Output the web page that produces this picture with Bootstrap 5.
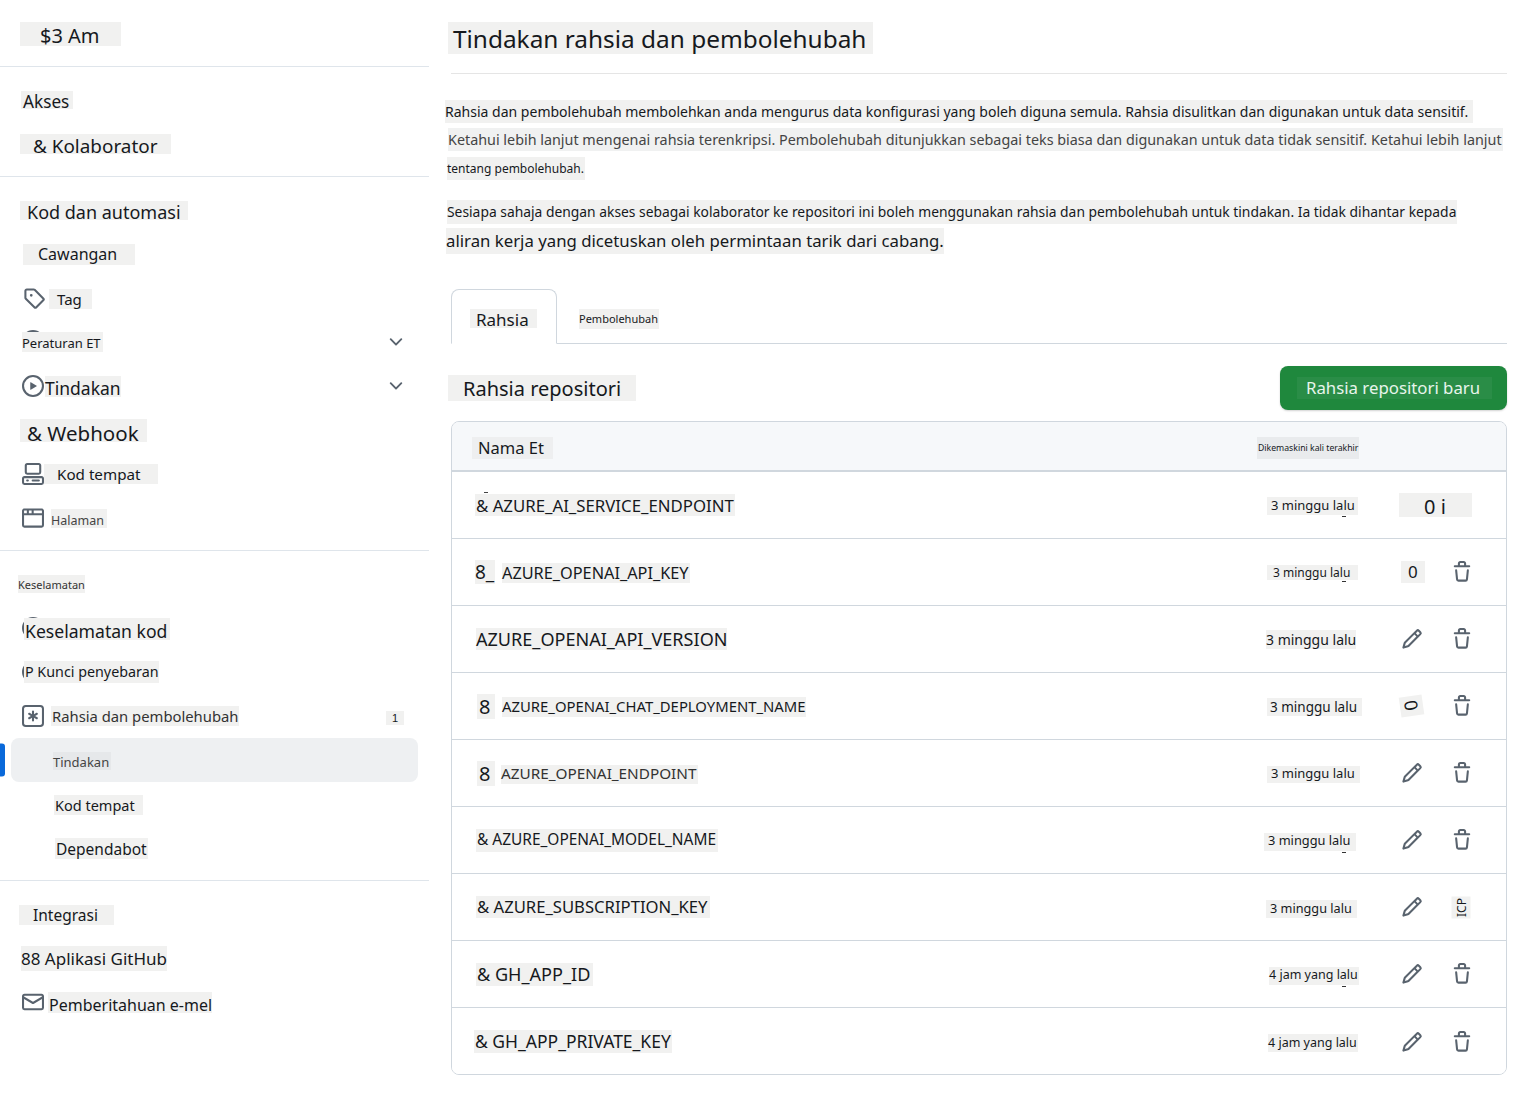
<!DOCTYPE html>
<html lang="ms">
<head>
<meta charset="utf-8">
<title>Tindakan rahsia dan pembolehubah</title>
<link href="https://cdn.jsdelivr.net/npm/bootstrap@5.3.0/dist/css/bootstrap.min.css" rel="stylesheet">
<style>
body{font-family:"Noto Sans",sans-serif;color:#16191d;background:#fff;overflow:hidden}
.pg{width:1523px;height:1097px}
.sb{width:429px;flex:none}
.sb-top{height:67px;border-bottom:1px solid #dfe5eb}
.sb-sec{padding:11px 0 10px;border-bottom:1px solid #dfe5eb}
.sb-sec.last{border-bottom:0}
.rw{height:44px}
.pt{display:block;background:#f1f1f0;white-space:nowrap;flex:none;position:relative}
.ic{width:22px;height:22px;flex:none;fill:#59636e}
.chev{width:20px;height:20px;fill:#59636e;margin-left:auto;margin-right:23px}
.act{background:#eef0f2;border-radius:8px;margin:0 11px}
.bar{width:5px;height:33px;background:#0969da;border-radius:0 3px 3px 0}
.s1{margin:2px 0 0 20px;width:101px;height:24px;line-height:28px;font-size:20px;padding-left:20px}
.s2{margin:0 0 0 21px;width:52px;height:18px;line-height:22px;font-size:17.2px;padding-left:2px}
.s3{margin:0 0 0 20px;width:151px;height:20px;line-height:24px;font-size:18.9px;padding-left:13px}
.s4{margin:0 0 0 20px;width:168px;height:19px;line-height:23px;font-size:18px;padding-left:7px}
.s5{margin:1px 0 0 23px;width:112px;height:21px;line-height:20px;font-size:16px;padding-left:15px}
.s6i{margin:0 0 0 23px}
.s6{margin:2px 0 0 4px;width:43px;height:20px;line-height:20px;font-size:15px;padding-left:8px}
.s7i{margin:-2px 0 0 22px}
.s7{margin:0 0 0 -22px;width:81px;height:20px;line-height:22px;font-size:13px}
.s8i{margin:0 0 0 22px}
.s8{margin:0 0 0 1px;width:76px;height:21px;line-height:25px;font-size:17.5px}
.s9{margin:0 0 0 20px;width:127px;height:23px;line-height:28px;font-size:20.5px;padding-left:7px}
.s10i{margin:0 0 0 22px}
.s10{margin:0;width:114px;height:20px;line-height:21px;font-size:15.2px;padding-left:13px}
.s11i{margin:0 0 0 22px}
.s11{margin:1px 0 0 7px;width:56px;height:19px;line-height:23px;font-size:12.5px;color:#444}
.s12{margin:0 0 0 18px;width:67px;height:18px;line-height:19px;font-size:11px;color:#333}
.s13i{margin:0 0 0 22px}
.s13{margin:2px 0 0 -20px;width:146px;height:22px;line-height:26px;font-size:17.6px;padding-left:1px}
.s14{margin:0 0 0 -20px;width:135px;height:22px;line-height:22px;font-size:14.3px;padding-left:1px}
.s15i{margin:0 0 0 22px}
.s15{margin:0 0 0 7px;width:188px;height:20px;line-height:20px;font-size:14.8px;padding-left:1px;color:#333}
.bdg{margin:3px 25px 0 auto;width:18px;height:14px;line-height:15px;font-size:11px;font-family:"Liberation Sans",sans-serif;text-align:center}
.s16{margin:2px 0 0 42px;width:58px;height:18px;line-height:20px;font-size:13px;background:#e6e8ea;color:#444}
.s17{margin:2px 0 0 54px;width:89px;height:20px;line-height:20px;font-size:14.5px;padding-left:1px}
.s18{margin:1px 0 0 55px;width:93px;height:21px;line-height:22px;font-size:15.5px;padding-left:1px}
.s19{margin:2px 0 0 19px;width:95px;height:20px;line-height:20px;font-size:15.5px;padding-left:14px}
.s20{margin:1px 0 0 21px;width:146px;height:25px;line-height:25px;font-size:17px}
.s21i{margin:0 0 0 22px}
.s21{margin:1px 0 0 4px;width:164px;height:21px;line-height:26px;font-size:16px;padding-left:1px}
.mn{width:1056px;margin-left:22px}
.hd{height:74px;border-bottom:1px solid #e5e5e5;padding-top:22px}
.h1p{margin:0 0 0 -3px;width:425px;height:32px;line-height:33px;font-size:24.4px;padding-left:5px;font-weight:400}
.l1{margin-top:26px;margin-left:-6px;width:1028px;height:23px;line-height:23px;font-size:14.03px}
.l2{margin-top:5px;margin-left:-3px;width:1055px;height:23px;line-height:23px;font-size:14.35px;color:#444;background:#f0f1f1}
.l3{margin-top:6px;margin-left:-4px;width:138px;height:23px;line-height:23px;font-size:12px}
.l4{margin-top:20px;margin-left:-4px;width:1010px;height:24px;line-height:24px;font-size:13.85px}
.l5{margin-top:4px;margin-left:-5px;width:498px;height:26px;line-height:26px;font-size:16.77px}
.nav-tabs.tb{margin-top:35px;height:55px;border-color:#d0d7de;align-items:stretch}
.tb .nav-link{height:55px;border-radius:8px 8px 0 0;padding:0;color:#16191d;display:flex;align-items:center;border-color:transparent}
.tb .nav-link.active{width:106px;border-color:#d0d7de #d0d7de #fff;margin-bottom:-1px;color:#16191d}
.tb .nav-link.other{margin-left:21px}
.t1{margin:4px 0 0 18px;width:67px;height:19px;line-height:22px;font-size:17px;padding-left:6px}
.t2{margin-top:4px;width:80px;height:20px;line-height:20px;font-size:11px}
.sh{margin-top:22px;height:44px}
.shp{margin:0 0 0 -3px;width:188px;height:26px;line-height:27px;font-size:20px;padding-left:15px;font-weight:400}
.btn.nw{width:227px;height:44px;border-radius:8px;background:#1f883d;border:0;padding:0;display:flex;align-items:center;text-align:left;box-shadow:0 1px 2px rgba(0,0,0,.18)}
.nwp{margin-left:17px;width:195px;height:22px;line-height:21px;font-size:16.8px;padding-left:9px;background:#2a8d47;color:#e8f5ec}
.card.bx{margin-top:11px;height:654px;border-color:#d0d7de;border-radius:8px;overflow:hidden}
.bxh{height:49px;background:#f6f8fa;border-bottom:1px solid #d0d7de;flex:none}
.nm{width:808px;flex:none}
.dt{width:135px;flex:none}
.list-group-item.rr{height:67px;padding:0;border-color:#d0d7de;display:flex;align-items:center;color:#16191d}
.h1c{margin:4px 0 0 20px;width:81px;height:22px;line-height:22px;font-size:16.5px;padding-left:6px;background:#eeeff0}
.h2c{margin:4px 0 0 -3px;width:102px;height:22px;line-height:22px;font-size:8.7px;padding-left:1px;background:#e9ebed}
.two{margin-left:23px;display:flex;align-items:center}
.n1{margin-left:23px;width:260px;height:22px;line-height:24px;font-size:16.8px;padding-left:1px}
.n1::before{content:"";position:absolute;left:9px;top:-2px;width:4px;height:1px;background:#444}
.b8{width:20px;height:24px;line-height:24px;font-size:19px}
.n2{margin:2px 0 0 7px;width:188px;height:20px;line-height:20px;font-size:16.3px}
.n3{margin-left:24px;width:251px;height:22px;line-height:22px;font-size:18.07px}
.b8b{margin:0 0 0 25px;width:18px;height:25px;line-height:25px;font-size:20px;padding-left:2px}
.n4{margin:2px 0 0 7px;width:304px;height:20px;line-height:19px;font-size:14.85px}
.n5{margin:2px 0 0 6px;width:197px;height:19px;line-height:17px;font-size:15.3px;color:#333}
.n6{margin-left:24px;width:242px;height:23px;line-height:20px;font-size:15.45px;padding-left:1px}
.n7{margin-left:24px;width:234px;height:22px;line-height:22px;font-size:16.65px;padding-left:1px}
.n8{margin-left:24px;width:117px;height:23px;line-height:23px;font-size:18.1px;padding-left:1px}
.n9{margin-left:22px;width:198px;height:23px;line-height:23px;font-size:17.5px;padding-left:1px}
.d1{margin:1px 0 0 7px;width:91px;height:18px;line-height:16px;font-size:13px;padding-left:4px}
.d2{margin:1px 0 0 7px;width:91px;height:15px;line-height:15px;font-size:12px;padding-left:6px}
.d3{margin:1px 0 0 6px;width:90px;height:19px;line-height:20px;font-size:14px}
.d4{margin:1px 0 0 7px;width:95px;height:18px;line-height:18px;font-size:13.5px;padding-left:3px}
.d5{margin:2px 0 0 7px;width:93px;height:17px;line-height:15px;font-size:13px;padding-left:4px}
.d6{margin:3px 0 0 4px;width:92px;height:18px;line-height:14px;font-size:12.8px;padding-left:4px}
.d7{margin:3px 0 0 6px;width:91px;height:18px;line-height:16px;font-size:12.7px;padding-left:4px}
.d8{margin:3px 0 0 9px;width:90px;height:18px;line-height:16px;font-size:12.5px}
.d9{margin:3px 0 0 8px;width:90px;height:18px;line-height:18px;font-size:12.5px}
.tk::after{content:"";position:absolute;left:75px;bottom:-2px;width:4px;height:1px;background:#333}
.d6.tk::after{left:78px}
.d8.tk::after{left:73px}
.z1{margin-left:4px;width:73px;height:24px;line-height:28px;font-size:20px;padding-left:25px}
.z2{margin:0 0 0 6px;width:24px;height:22px;line-height:22px;font-size:17px;padding-left:7px}
.tr2{margin-left:28px}
.z2+.tr2{margin-left:26px}
.z4{margin:0 0 0 5px;width:23px;height:20px;line-height:19px;font-size:18px;text-align:center;transform:rotate(-8deg)}
.z4 span{display:inline-block;transform:rotate(88deg)}
.z7{margin-left:27px;width:22px;height:19px;line-height:19px;font-size:12px;text-align:center;transform:rotate(-90deg)}
.pi{margin-left:6px}
</style>
</head>
<body>
<svg width="0" height="0" class="d-block">
<defs>
<symbol id="i-tag" viewBox="0 0 16 16"><path d="M1 7.775V2.75C1 1.784 1.784 1 2.75 1h5.025c.464 0 .91.184 1.238.513l6.25 6.25a1.75 1.75 0 0 1 0 2.474l-5.026 5.026a1.75 1.75 0 0 1-2.474 0l-6.25-6.25A1.752 1.752 0 0 1 1 7.775Zm1.5 0c0 .066.026.13.073.177l6.25 6.25a.25.25 0 0 0 .354 0l5.025-5.025a.25.25 0 0 0 0-.354l-6.25-6.25a.25.25 0 0 0-.177-.073H2.75a.25.25 0 0 0-.25.25ZM6 5a1 1 0 1 1 0 2 1 1 0 0 1 0-2Z"/></symbol>
<symbol id="i-play" viewBox="0 0 16 16"><path d="M8 0a8 8 0 1 1 0 16A8 8 0 0 1 8 0ZM1.5 8a6.5 6.5 0 1 0 13 0 6.5 6.5 0 0 0-13 0Zm4.879-2.773 4.264 2.559a.25.25 0 0 1 0 .428l-4.264 2.559A.25.25 0 0 1 6 10.559V5.442a.25.25 0 0 1 .379-.215Z"/></symbol>
<symbol id="i-code" viewBox="0 0 16 16"><path d="M0 11.25c0-.966.784-1.75 1.75-1.75h12.5c.966 0 1.75.784 1.75 1.75v3A1.75 1.75 0 0 1 14.25 16H1.75A1.75 1.75 0 0 1 0 14.25Zm2-9.5C2 .784 2.784 0 3.75 0h8.5C13.216 0 14 .784 14 1.75v5a1.75 1.75 0 0 1-1.75 1.75h-8.5A1.75 1.75 0 0 1 2 6.75Zm1.75-.25a.25.25 0 0 0-.25.25v5c0 .138.112.25.25.25h8.5a.25.25 0 0 0 .25-.25v-5a.25.25 0 0 0-.25-.25Zm-2 9.5a.25.25 0 0 0-.25.25v3c0 .138.112.25.25.25h12.5a.25.25 0 0 0 .25-.25v-3a.25.25 0 0 0-.25-.25ZM7 12.75a.75.75 0 0 1 .75-.75h4.5a.75.75 0 0 1 0 1.5h-4.5a.75.75 0 0 1-.75-.75Zm-4 0a.75.75 0 0 1 .75-.75h.5a.75.75 0 0 1 0 1.5h-.5a.75.75 0 0 1-.75-.75Z"/></symbol>
<symbol id="i-browser" viewBox="0 0 16 16"><path d="M0 2.75C0 1.784.784 1 1.75 1h12.5c.966 0 1.75.784 1.75 1.75v10.5A1.75 1.75 0 0 1 14.25 15H1.75A1.75 1.75 0 0 1 0 13.25ZM14.5 6h-13v7.25c0 .138.112.25.25.25h12.5a.25.25 0 0 0 .25-.25Zm-6-3.5v2h6V2.75a.25.25 0 0 0-.25-.25ZM5 2.5v2h2v-2Zm-3.25 0a.25.25 0 0 0-.25.25V4.5h2v-2Z"/></symbol>
<symbol id="i-aster" viewBox="0 0 16 16"><path d="M0 2.75A2.75 2.75 0 0 1 2.75 0h10.5A2.75 2.75 0 0 1 16 2.75v10.5A2.75 2.75 0 0 1 13.25 16H2.75A2.75 2.75 0 0 1 0 13.25ZM2.75 1.5c-.69 0-1.25.56-1.25 1.25v10.5c0 .69.56 1.25 1.25 1.25h10.5c.69 0 1.25-.56 1.25-1.25V2.75c0-.69-.56-1.25-1.25-1.25ZM8 4a.75.75 0 0 1 .75.75V6.7l1.69-.975a.75.75 0 0 1 .75 1.3L9.5 8l1.69.976a.75.75 0 0 1-.75 1.298L8.75 9.3v1.95a.75.75 0 0 1-1.5 0V9.299l-1.69.975a.75.75 0 0 1-.75-1.298L6.5 8l-1.69-.975a.75.75 0 0 1 .75-1.3l1.69.976V4.75A.75.75 0 0 1 8 4Z"/></symbol>
<symbol id="i-mail" viewBox="0 0 16 16"><path d="M1.75 2h12.5c.966 0 1.75.784 1.75 1.75v8.5A1.75 1.75 0 0 1 14.25 14H1.75A1.75 1.75 0 0 1 0 12.25v-8.5C0 2.784.784 2 1.75 2ZM1.5 12.251c0 .138.112.25.25.25h12.5a.25.25 0 0 0 .25-.25V5.809L8.38 9.397a.75.75 0 0 1-.76 0L1.5 5.809v6.442Zm13-8.181v-.32a.25.25 0 0 0-.25-.25H1.75a.25.25 0 0 0-.25.25v.32L8 7.88Z"/></symbol>
<symbol id="i-pen" viewBox="0 0 16 16"><path d="M11.013 1.427a1.75 1.75 0 0 1 2.474 0l1.086 1.086a1.75 1.75 0 0 1 0 2.474l-8.61 8.61c-.21.21-.47.364-.756.445l-3.251.93a.75.75 0 0 1-.927-.928l.929-3.25c.081-.286.235-.547.445-.758l8.61-8.61Zm.176 4.823L9.75 4.81l-6.286 6.287a.253.253 0 0 0-.064.108l-.558 1.953 1.953-.558a.253.253 0 0 0 .108-.064Zm1.238-3.763a.25.25 0 0 0-.354 0L10.811 3.75l1.439 1.44 1.263-1.263a.25.25 0 0 0 0-.354Z"/></symbol>
<symbol id="i-trash" viewBox="0 0 16 16"><path d="M11 1.75V3h2.25a.75.75 0 0 1 0 1.5H2.75a.75.75 0 0 1 0-1.5H5V1.75C5 .784 5.784 0 6.75 0h2.5C10.216 0 11 .784 11 1.75ZM4.496 6.675l.66 6.6a.25.25 0 0 0 .249.225h5.19a.25.25 0 0 0 .249-.225l.66-6.6a.75.75 0 0 1 1.492.149l-.66 6.6A1.748 1.748 0 0 1 10.595 15h-5.19a1.75 1.75 0 0 1-1.741-1.575l-.66-6.6a.75.75 0 1 1 1.492-.15ZM6.5 1.75V3h3V1.75a.25.25 0 0 0-.25-.25h-2.5a.25.25 0 0 0-.25.25Z"/></symbol>
<symbol id="i-chev" viewBox="0 0 16 16"><path d="M12.78 5.22a.749.749 0 0 1 0 1.06l-4.25 4.25a.749.749 0 0 1-1.06 0L3.22 6.28a.749.749 0 1 1 1.06-1.06L8 8.939l3.72-3.719a.749.749 0 0 1 1.06 0Z"/></symbol>
<symbol id="i-circ" viewBox="0 0 16 16"><path d="M8 0a8 8 0 1 1 0 16A8 8 0 0 1 8 0ZM1.5 8a6.5 6.5 0 1 0 13 0 6.5 6.5 0 0 0-13 0Z"/></symbol>
</defs>
</svg>
<div class="pg d-flex">
  <aside class="sb">
    <div class="sb-top d-flex align-items-center"><div class="pt s1">$3 Am</div></div>
    <div class="sb-sec">
      <div class="rw d-flex align-items-center"><div class="pt s2">Akses</div></div>
      <div class="rw d-flex align-items-center"><div class="pt s3">&amp; Kolaborator</div></div>
    </div>
    <div class="sb-sec">
      <div class="rw d-flex align-items-center"><div class="pt s4">Kod dan automasi</div></div>
      <div class="rw d-flex align-items-center"><div class="pt s5">Cawangan</div></div>
      <div class="rw d-flex align-items-center"><svg class="ic s6i"><use href="#i-tag"/></svg><div class="pt s6">Tag</div></div>
      <div class="rw d-flex align-items-center"><svg class="ic s7i"><use href="#i-circ"/></svg><div class="pt s7">Peraturan ET</div><svg class="chev"><use href="#i-chev"/></svg></div>
      <div class="rw d-flex align-items-center"><svg class="ic s8i"><use href="#i-play"/></svg><div class="pt s8">Tindakan</div><svg class="chev"><use href="#i-chev"/></svg></div>
      <div class="rw d-flex align-items-center"><div class="pt s9">&amp; Webhook</div></div>
      <div class="rw d-flex align-items-center"><svg class="ic s10i"><use href="#i-code"/></svg><div class="pt s10">Kod tempat</div></div>
      <div class="rw d-flex align-items-center"><svg class="ic s11i"><use href="#i-browser"/></svg><div class="pt s11">Halaman</div></div>
    </div>
    <div class="sb-sec">
      <div class="rw d-flex align-items-center"><div class="pt s12">Keselamatan</div></div>
      <div class="rw d-flex align-items-center"><svg class="ic s13i"><use href="#i-circ"/></svg><div class="pt s13">Keselamatan kod</div></div>
      <div class="rw d-flex align-items-center"><svg class="ic s13i"><use href="#i-circ"/></svg><div class="pt s14">P Kunci penyebaran</div></div>
      <div class="rw d-flex align-items-center"><svg class="ic s15i"><use href="#i-aster"/></svg><div class="pt s15">Rahsia dan pembolehubah</div><div class="pt bdg">1</div></div>
      <div class="rw d-flex align-items-center position-relative"><div class="bar position-absolute top-50 start-0 translate-middle-y"></div><div class="act flex-grow-1 h-100 d-flex align-items-center"><div class="pt s16">Tindakan</div></div></div>
      <div class="rw d-flex align-items-center"><div class="pt s17">Kod tempat</div></div>
      <div class="rw d-flex align-items-center"><div class="pt s18">Dependabot</div></div>
    </div>
    <div class="sb-sec last">
      <div class="rw d-flex align-items-center"><div class="pt s19">Integrasi</div></div>
      <div class="rw d-flex align-items-center"><div class="pt s20">88 Aplikasi GitHub</div></div>
      <div class="rw d-flex align-items-center"><svg class="ic s21i"><use href="#i-mail"/></svg><div class="pt s21">Pemberitahuan e-mel</div></div>
    </div>
  </aside>
  <main class="mn">
    <div class="hd"><h1 class="pt h1p">Tindakan rahsia dan pembolehubah</h1></div>
    <div class="pt l1">Rahsia dan pembolehubah membolehkan anda mengurus data konfigurasi yang boleh diguna semula. Rahsia disulitkan dan digunakan untuk data sensitif.</div>
    <div class="pt l2">Ketahui lebih lanjut mengenai rahsia terenkripsi. Pembolehubah ditunjukkan sebagai teks biasa dan digunakan untuk data tidak sensitif. Ketahui lebih lanjut</div>
    <div class="pt l3">tentang pembolehubah.</div>
    <div class="pt l4">Sesiapa sahaja dengan akses sebagai kolaborator ke repositori ini boleh menggunakan rahsia dan pembolehubah untuk tindakan. Ia tidak dihantar kepada</div>
    <div class="pt l5">aliran kerja yang dicetuskan oleh permintaan tarik dari cabang.</div>
    <ul class="nav nav-tabs tb">
      <li class="nav-item"><a class="nav-link active" href="#"><span class="pt t1">Rahsia</span></a></li>
      <li class="nav-item"><a class="nav-link other" href="#"><span class="pt t2">Pembolehubah</span></a></li>
    </ul>
    <div class="sh d-flex justify-content-between align-items-center">
      <h2 class="pt shp">Rahsia repositori</h2>
      <button type="button" class="btn btn-success nw"><span class="pt nwp">Rahsia repositori baru</span></button>
    </div>
    <div class="card bx">
      <div class="bxh d-flex align-items-center">
        <div class="nm"><div class="pt h1c">Nama Et</div></div>
        <div class="dt"><div class="pt h2c">Dikemaskini kali terakhir</div></div>
      </div>
      <div class="list-group list-group-flush">
        <div class="list-group-item rr"><div class="nm"><div class="pt n1">&amp; AZURE_AI_SERVICE_ENDPOINT</div></div><div class="dt"><div class="pt d1 tk">3 minggu lalu</div></div><div class="d-flex align-items-center"><div class="pt z1">0 i</div></div></div>
        <div class="list-group-item rr"><div class="nm"><div class="two"><div class="pt b8">8_</div><div class="pt n2">AZURE_OPENAI_API_KEY</div></div></div><div class="dt"><div class="pt d2 tk">3 minggu lalu</div></div><div class="d-flex align-items-center"><div class="pt z2">0</div><svg class="ic tr2"><use href="#i-trash"/></svg></div></div>
        <div class="list-group-item rr"><div class="nm"><div class="pt n3">AZURE_OPENAI_API_VERSION</div></div><div class="dt"><div class="pt d3">3 minggu lalu</div></div><div class="d-flex align-items-center"><svg class="ic pi"><use href="#i-pen"/></svg><svg class="ic tr2"><use href="#i-trash"/></svg></div></div>
        <div class="list-group-item rr"><div class="nm d-flex align-items-center"><div class="pt b8b">8</div><div class="pt n4">AZURE_OPENAI_CHAT_DEPLOYMENT_NAME</div></div><div class="dt"><div class="pt d4">3 minggu lalu</div></div><div class="d-flex align-items-center"><div class="pt z4"><span>0</span></div><svg class="ic tr2"><use href="#i-trash"/></svg></div></div>
        <div class="list-group-item rr"><div class="nm d-flex align-items-center"><div class="pt b8b">8</div><div class="pt n5">AZURE_OPENAI_ENDPOINT</div></div><div class="dt"><div class="pt d5">3 minggu lalu</div></div><div class="d-flex align-items-center"><svg class="ic pi"><use href="#i-pen"/></svg><svg class="ic tr2"><use href="#i-trash"/></svg></div></div>
        <div class="list-group-item rr"><div class="nm"><div class="pt n6">&amp; AZURE_OPENAI_MODEL_NAME</div></div><div class="dt"><div class="pt d6 tk">3 minggu lalu</div></div><div class="d-flex align-items-center"><svg class="ic pi"><use href="#i-pen"/></svg><svg class="ic tr2"><use href="#i-trash"/></svg></div></div>
        <div class="list-group-item rr"><div class="nm"><div class="pt n7">&amp; AZURE_SUBSCRIPTION_KEY</div></div><div class="dt"><div class="pt d7">3 minggu lalu</div></div><div class="d-flex align-items-center"><svg class="ic pi"><use href="#i-pen"/></svg><div class="pt z7">ICP</div></div></div>
        <div class="list-group-item rr"><div class="nm"><div class="pt n8">&amp; GH_APP_ID</div></div><div class="dt"><div class="pt d8 tk">4 jam yang lalu</div></div><div class="d-flex align-items-center"><svg class="ic pi"><use href="#i-pen"/></svg><svg class="ic tr2"><use href="#i-trash"/></svg></div></div>
        <div class="list-group-item rr"><div class="nm"><div class="pt n9">&amp; GH_APP_PRIVATE_KEY</div></div><div class="dt"><div class="pt d9">4 jam yang lalu</div></div><div class="d-flex align-items-center"><svg class="ic pi"><use href="#i-pen"/></svg><svg class="ic tr2"><use href="#i-trash"/></svg></div></div>
      </div>
    </div>
  </main>
</div>
<script src="https://cdn.jsdelivr.net/npm/bootstrap@5.3.0/dist/js/bootstrap.bundle.min.js"></script>
</body>
</html>
